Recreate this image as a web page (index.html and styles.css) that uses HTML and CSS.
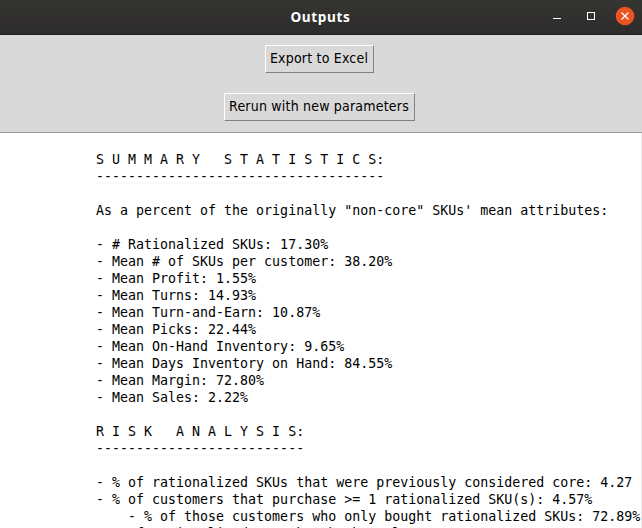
FILE: index.html
```html
<!DOCTYPE html>
<html lang="en">
<head>
<meta charset="utf-8">
<title>Outputs</title>
<link rel="stylesheet" href="styles.css">
</head>
<body>
<main class="window">
<header class="titlebar">
<h1 class="title">Outputs</h1>
<svg class="controls" width="92" height="34" viewBox="0 0 92 34" fill="none">
<path d="M3 18.5h8" stroke="#fff"/>
<rect x="37.5" y="12.5" width="7" height="7" stroke="#fff"/>
<circle cx="75" cy="16" r="9.3" fill="#e95420"/>
<path d="M71.5 12.5l7 7m0-7l-7 7" stroke="#fff" stroke-width="1.3"/>
</svg>
</header>
<section class="toolbar">
<button class="button export">Export to Excel</button>
<button class="button rerun">Rerun with new parameters</button>
</section>
<section class="output">
<pre class="report">S U M M A R Y   S T A T I S T I C S:
------------------------------------

As a percent of the originally "non-core" SKUs' mean attributes:

- # Rationalized SKUs: 17.30%
- Mean # of SKUs per customer: 38.20%
- Mean Profit: 1.55%
- Mean Turns: 14.93%
- Mean Turn-and-Earn: 10.87%
- Mean Picks: 22.44%
- Mean On-Hand Inventory: 9.65%
- Mean Days Inventory on Hand: 84.55%
- Mean Margin: 72.80%
- Mean Sales: 2.22%

R I S K   A N A L Y S I S:
--------------------------

- % of rationalized SKUs that were previously considered core: 4.27
- % of customers that purchase &gt;= 1 rationalized SKU(s): 4.57%
    - % of those customers who only bought rationalized SKUs: 72.89%
- # of rationalized SKUs bought by only 1 customer</pre>
</section>
</main>
</body>
</html>
```

FILE: styles.css
```css
* { box-sizing: border-box; }
body { margin: 0; overflow: hidden; }
.window { width: 642px; height: 528px; display: flex; flex-direction: column; overflow: hidden; background: #fff; }
.titlebar { flex: none; height: 35px; display: grid; grid-template-columns: 92px 1fr 92px; background: linear-gradient(#353531, #2d2b2c); border-bottom: 1px solid #1d1b1b; }
.title { grid-column: 2; margin: 0; padding-right: 1px; text-align: center; color: #fff; font: bold 13.6px/34px "Noto Sans", sans-serif; letter-spacing: .65px; }
.controls { display: block; }
.toolbar { flex: none; height: 98px; padding: 10px 4px 0 0; display: flex; flex-direction: column; align-items: center; gap: 20px; background: #d9d9d9; border-bottom: 1px solid #999; }
.button { height: 28px; padding: 0 0 2px; border: 1px solid; border-color: #fff #828282 #828282 #fff; border-radius: 0; background: #d9d9d9; color: #000; font: 14px/24px "DejaVu Sans Condensed", "DejaVu Sans", sans-serif; letter-spacing: .2px; white-space: nowrap; }
.export { width: 109px; }
.rerun { width: 191px; }
.output { flex: 1; min-height: 0; padding: 18px 0 0 96px; border-right: 1px solid #e8e8e8; overflow: hidden; }
.report { margin: 0; color: #000; font: 13.3px/17px "DejaVu Sans Mono", monospace; }
```
